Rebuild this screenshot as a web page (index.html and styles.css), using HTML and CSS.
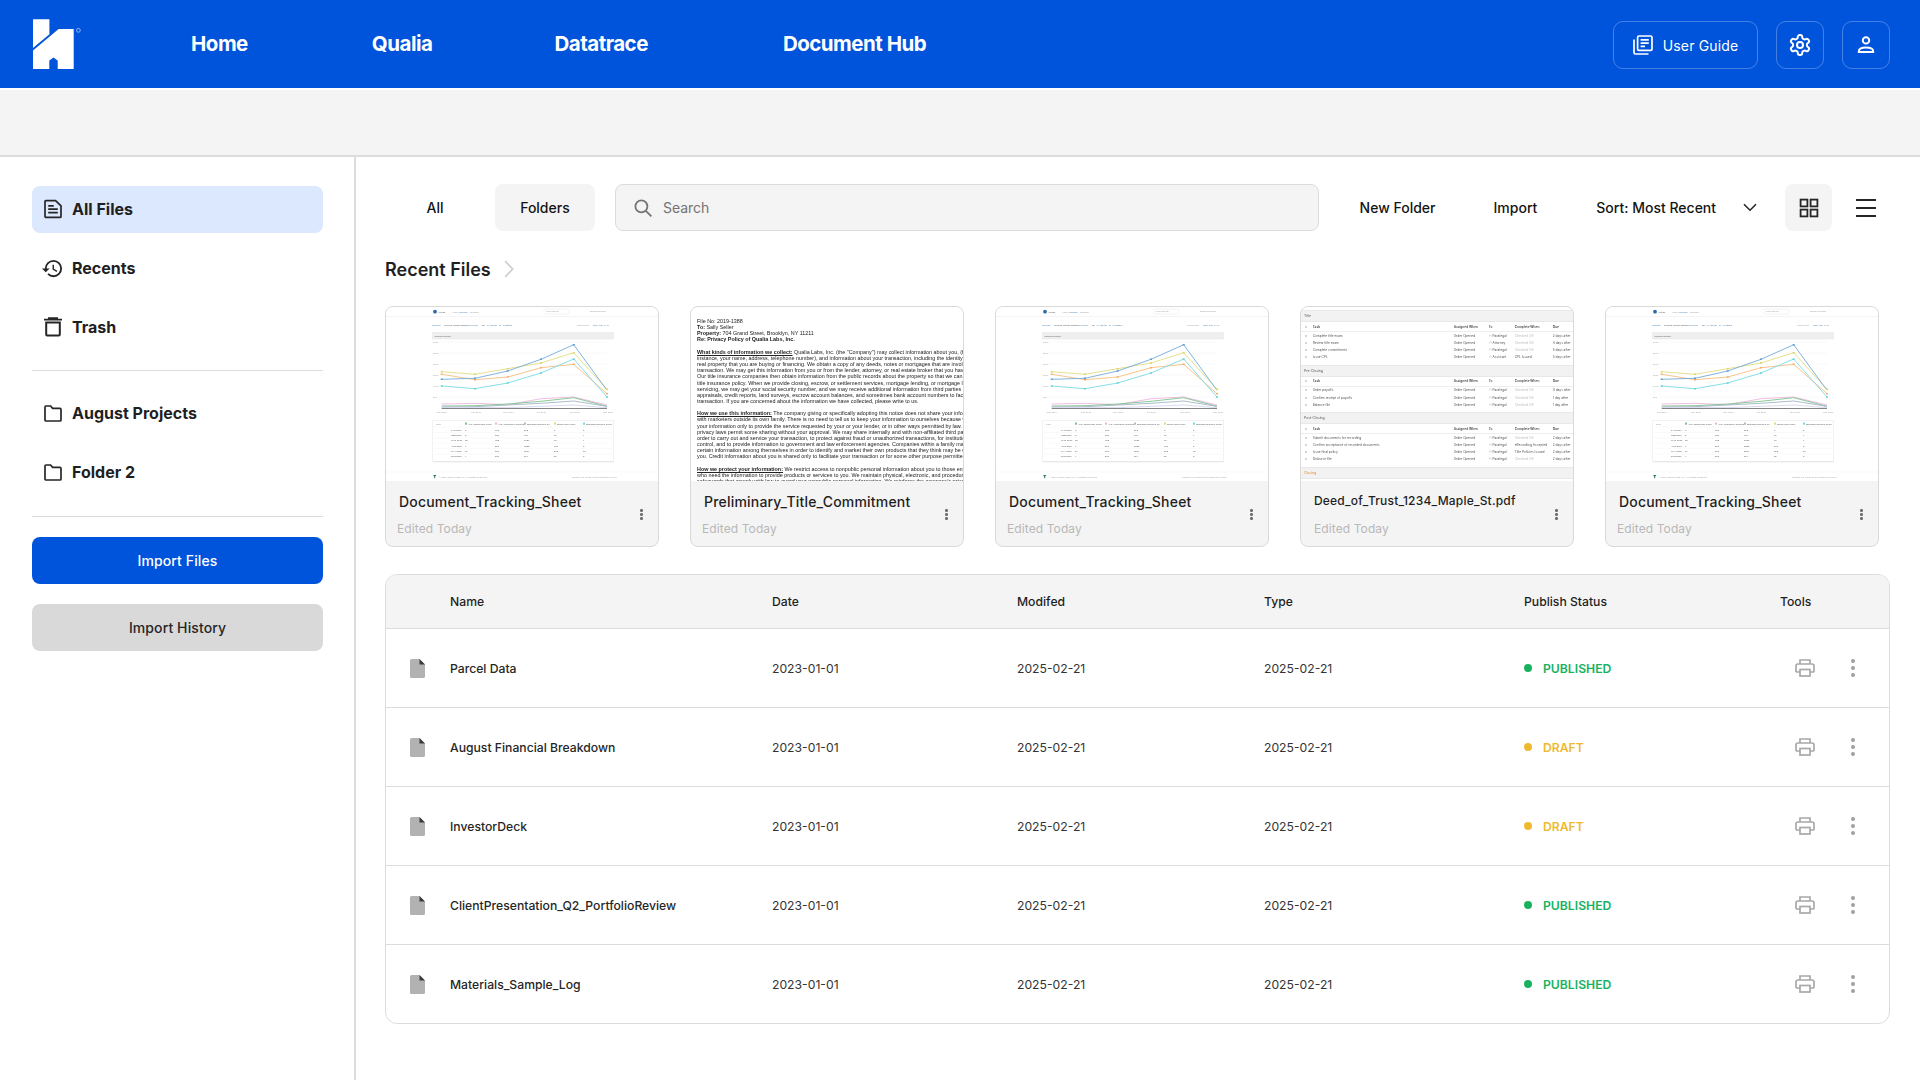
FILE: index.html
```html
<!DOCTYPE html>
<html lang="en">
<head>
<meta charset="utf-8">
<title>Document Hub</title>
<link rel="stylesheet" href="styles.css">
</head>
<body>
<header class="topbar">
  <svg class="logo" viewBox="33 18 48 50" width="48" height="50" aria-label="logo">
    <path fill="#fff" d="M33 18.9a.6.6 0 0 1 .6-.6H49.4v14.9L33 47z"/>
    <path fill="#fff" d="M33 49.6 58.6 27.9h15.1v39.8a.6.6 0 0 1-.6.6H57.7v-8.8L53.5 56.5l-4.2 3v8.8H33.6a.6.6 0 0 1-.6-.6z"/>
    <circle cx="78.4" cy="29.3" r="1.9" fill="none" stroke="#9dbcf2" stroke-width=".9"/>
  </svg>
  <nav class="nav">
    <a class="nav-link nav-home">Home</a>
    <a class="nav-link nav-qualia">Qualia</a>
    <a class="nav-link nav-data">Datatrace</a>
    <a class="nav-link nav-doc">Document Hub</a>
  </nav>
  <div class="top-actions">
    <button class="top-btn guide">
      <svg viewBox="0 0 20 20" width="20" height="20"><path d="M1 4.5V17.5A1.5 1.5 0 0 0 2.5 19H15.5" fill="none" stroke="#fff" stroke-width="1.7"/><rect x="4.6" y="1" width="14.4" height="14.4" rx="1.4" fill="none" stroke="#fff" stroke-width="1.7"/><path d="M7.6 4.8h8.2M7.6 8.1h8.2M7.6 11.4h4.4" stroke="#fff" stroke-width="1.7"/></svg>
      <span>User Guide</span>
    </button>
    <button class="top-btn square">
      <svg viewBox="0 0 24 24" width="24" height="24" fill="none" stroke="#fff" stroke-width="2"><path d="M12.22 2h-.44a2 2 0 0 0-2 2v.18a2 2 0 0 1-1 1.73l-.43.25a2 2 0 0 1-2 0l-.15-.08a2 2 0 0 0-2.73.73l-.22.38a2 2 0 0 0 .73 2.73l.15.1a2 2 0 0 1 1 1.72v.51a2 2 0 0 1-1 1.74l-.15.09a2 2 0 0 0-.73 2.73l.22.38a2 2 0 0 0 2.73.73l.15-.08a2 2 0 0 1 2 0l.43.25a2 2 0 0 1 1 1.73V20a2 2 0 0 0 2 2h.44a2 2 0 0 0 2-2v-.18a2 2 0 0 1 1-1.73l.43-.25a2 2 0 0 1 2 0l.15.08a2 2 0 0 0 2.73-.73l.22-.39a2 2 0 0 0-.73-2.73l-.15-.08a2 2 0 0 1-1-1.74v-.5a2 2 0 0 1 1-1.74l.15-.09a2 2 0 0 0 .73-2.73l-.22-.38a2 2 0 0 0-2.73-.73l-.15.08a2 2 0 0 1-2 0l-.43-.25a2 2 0 0 1-1-1.73V4a2 2 0 0 0-2-2z"/><circle cx="12" cy="12" r="3"/></svg>
    </button>
    <button class="top-btn square">
      <svg viewBox="0 0 24 24" width="24" height="24" fill="none" stroke="#fff" stroke-width="2"><circle cx="12" cy="7.4" r="3.2"/><path d="M4.8 19v-.6c0-2.6 3.6-3.8 7.2-3.8s7.2 1.2 7.2 3.8v.6z"/></svg>
    </button>
  </div>
</header>
<div class="subbar"></div>

<div class="layout">
  <aside class="sidebar">
    <ul class="side-list">
      <li class="side-item active">
        <svg viewBox="0 0 20 20" width="20" height="20" fill="none" stroke="#262626" stroke-width="1.7"><path d="M2 2.6a1 1 0 0 1 1-1h9.6l5.4 5.2v10.6a1 1 0 0 1-1 1H3a1 1 0 0 1-1-1z"/><path d="M5.2 6.8h5.6M5.2 10.2h9.6M5.2 13.6h9.6"/></svg>
        All Files
      </li>
      <li class="side-item">
        <svg class="hist" viewBox="0 0 24 24" width="23" height="23" fill="#262626"><path d="M13 3a9 9 0 0 0-9 9H1l3.89 3.89.07.14L9 12H6c0-3.87 3.13-7 7-7s7 3.13 7 7-3.13 7-7 7c-1.93 0-3.68-.79-4.94-2.06l-1.42 1.42A8.954 8.954 0 0 0 13 21a9 9 0 0 0 0-18zm-1 5v5l4.28 2.54.72-1.21-3.5-2.08V8H12z"/></svg>
        Recents
      </li>
      <li class="side-item">
        <svg viewBox="0 0 20 20" width="20" height="20" fill="none" stroke="#262626" stroke-width="2"><path d="M1 2.6h18M5 1h10" stroke-width="1.6"/><path d="M3.2 5.4h13.6v12.2a1 1 0 0 1-1 1H4.2a1 1 0 0 1-1-1z"/></svg>
        Trash
      </li>
    </ul>
    <div class="side-rule"></div>
    <ul class="side-list">
      <li class="side-item">
        <svg viewBox="0 0 20 20" width="20" height="20" fill="none" stroke="#262626" stroke-width="1.7"><path d="M2 4a1 1 0 0 1 1-1h4.6l2 2.4H17a1 1 0 0 1 1 1V17a1 1 0 0 1-1 1H3a1 1 0 0 1-1-1z"/></svg>
        August Projects
      </li>
      <li class="side-item">
        <svg viewBox="0 0 20 20" width="20" height="20" fill="none" stroke="#262626" stroke-width="1.7"><path d="M2 4a1 1 0 0 1 1-1h4.6l2 2.4H17a1 1 0 0 1 1 1V17a1 1 0 0 1-1 1H3a1 1 0 0 1-1-1z"/></svg>
        Folder 2
      </li>
    </ul>
    <div class="side-rule rule-low"></div>
    <button class="side-btn primary">Import Files</button>
    <button class="side-btn secondary">Import History</button>
  </aside>

  <main class="content">
    <div class="toolbar">
      <button class="tab">All</button>
      <button class="tab tab-on">Folders</button>
      <div class="search">
        <svg viewBox="0 0 20 20" width="20" height="20" fill="none" stroke="#737373" stroke-width="1.8"><circle cx="8.4" cy="8.4" r="6"/><path d="M12.8 12.8 18.4 18.4"/></svg>
        <span>Search</span>
      </div>
      <button class="tool tool-folder">New Folder</button>
      <button class="tool tool-import">Import</button>
      <button class="tool tool-sort">Sort: Most Recent
        <svg viewBox="0 0 14 9" width="14" height="9" fill="none" stroke="#262626" stroke-width="1.6"><path d="M1 1.2 7 7.2 13 1.2"/></svg>
      </button>
      <button class="view view-on">
        <svg viewBox="0 0 20 20" width="20" height="20" fill="none" stroke="#262626" stroke-width="1.8"><rect x="1.6" y="1.6" width="6.8" height="6.8"/><rect x="11.6" y="1.6" width="6.8" height="6.8"/><rect x="1.6" y="11.6" width="6.8" height="6.8"/><rect x="11.6" y="11.6" width="6.8" height="6.8"/></svg>
      </button>
      <button class="view">
        <svg viewBox="0 0 20 20" width="20" height="20" stroke="#262626" stroke-width="1.8"><path d="M0 2h20M0 10h20M0 18h20"/></svg>
      </button>
    </div>

    <h2 class="recent-title">Recent Files
      <svg viewBox="0 0 10 18" width="10" height="18" fill="none" stroke="#d0d0d0" stroke-width="1.8"><path d="M1.2 1.2 8.6 9 1.2 16.8"/></svg>
    </h2>

    <section class="cards">
      <article class="card">
        <div class="thumb">
          <svg class="chart" viewBox="0 0 272 175" width="272" height="175">
            <line x1="0" y1="9.5" x2="272" y2="9.5" stroke="#eee" stroke-width=".6"/>
            <circle cx="49" cy="4.7" r="1.9" fill="#2c6ca8"/>
            <text x="52" y="5.8" class="t b">Amuse</text><text x="66" y="5.8" class="t g">Home</text><text x="73" y="5.8" class="t l">Reports</text><text x="84" y="5.8" class="t g">Settings</text>
            <rect x="158" y="2" width="25" height="5" rx="1.5" fill="none" stroke="#ddd" stroke-width=".4"/><text x="160" y="5.4" class="t g">Find agents</text><text x="204" y="5.4" class="t g">Sarah Johnson</text>
            <text x="46" y="18.5" class="t l">Reports</text><text x="58" y="18.5" class="t b">Policies Report showing</text><text x="84" y="18.5" class="t l">Volume</text><text x="96" y="18.5" class="t b">for</text><text x="100" y="18.5" class="t l">All Agents</text><text x="113" y="18.5" class="t b">in</text><text x="116" y="18.5" class="t l">All States</text>
            <text x="191" y="18.5" class="t g">Last report:</text><text x="207" y="18.5" class="t l">This Year</text><text x="218" y="18.5" class="t g">2017</text>
            <rect x="46.5" y="25.5" width="181" height="6.5" fill="#efefef" stroke="#dfdfdf" stroke-width=".4"/><text x="48.5" y="30" class="t b">Policies Report</text>
            <path d="M53 35h168M53 46h168M53 57h168M53 68h168M53 79h168M53 90h168" stroke="#efefef" stroke-width=".4"/>
            <text x="47" y="36" class="t g">3000</text><text x="47" y="47" class="t g">2500</text><text x="47" y="58" class="t g">2000</text><text x="47" y="69" class="t g">1500</text><text x="47" y="80" class="t g">1000</text><text x="47" y="91" class="t g">500</text>
            <g fill="none" stroke-width=".9">
              <polyline stroke="#e2dc80" points="55.7,64.7 89,67.3 121.7,61.7 155,56 187.7,45.7 221,82.3"/>
              <polyline stroke="#f8bd7e" points="55.7,67.3 89,72.7 121.7,70 155,60.7 187.7,57.3 221,86.7"/>
              <polyline stroke="#72acdb" points="55.7,72.3 89,71.3 121.7,64 155,52.3 187.7,37.7 221,83.3"/>
              <polyline stroke="#78dbe3" points="55.7,79 89,81.7 121.7,76 155,66 187.7,52 221,90"/>
              <polyline stroke="#f1b5e0" points="55.7,97 89,96.3 121.7,97.7 155,91.7 187.7,90 221,98"/>
              <polyline stroke="#7cc48c" points="55.7,99 89,98.7 121.7,97 155,94.3 187.7,90.7 221,99.3"/>
              <polyline stroke="#a0b5c5" points="55.7,100 89,99.7 121.7,98 155,96.3 187.7,94 221,99.3"/>
              <polyline stroke="#d5d5ef" points="55.7,100.7 121.7,100.7 155,99.3 187.7,98 221,100.7"/>
              <polyline stroke="#777" points="55.7,101.5 221,101.5"/>
            </g>
            <path d="M54.7 72.3h2M88 71.3h2M120.7 64h2M154 52.3h2M186.7 37.7h2" stroke="#5e9ed2" stroke-width="1.6"/>
            <path d="M54.7 64.7h2M88 67.3h2M120.7 61.7h2M154 56h2M186.7 45.7h2M220 82.3h2" stroke="#dcd56a" stroke-width="1.6"/>
            <path d="M54.7 67.3h2M88 72.7h2M120.7 70h2M154 60.7h2M186.7 57.3h2M220 86.7h2" stroke="#f5ae66" stroke-width="1.6"/>
            <path d="M54.7 79h2M88 81.7h2M120.7 76h2M154 66h2M186.7 52h2M220 90h2" stroke="#62d3dc" stroke-width="1.6"/>
            <text x="51" y="106" class="t g">Jan 2016</text><text x="85" y="106" class="t g">Mar 2016</text><text x="117" y="106" class="t g">May 2016</text><text x="151" y="106" class="t g">Jul 2016</text><text x="184" y="106" class="t g">Sep 2016</text><text x="217" y="106" class="t g">Nov 2016</text>
            <rect x="46.7" y="113.3" width="181" height="41" fill="#fff" stroke="#e9e9e9" stroke-width=".6"/><rect x="46.7" y="154.3" width="181" height="1" fill="#e4e4e4"/>
            <rect x="79" y="115.5" width="2" height="2.2" fill="#7cc48c"/><rect x="109" y="115.5" width="2" height="2.2" fill="#f1b5e0"/><rect x="138" y="115.5" width="2" height="2.2" fill="#bbb"/><rect x="168" y="115.5" width="2" height="2.2" fill="#e2dc80"/><rect x="197" y="115.5" width="2" height="2.2" fill="#78dbe3"/>
            <text x="50" y="117.8" class="t g">Date</text><text x="82" y="117.8" class="t b">ALTA Brokerage Policy</text><text x="112" y="117.8" class="t b">ALTA Refinance Owner's</text><text x="141" y="117.8" class="t b">Standard Owner's Po</text><text x="171" y="117.8" class="t b">Short Loan Policy</text><text x="200" y="117.8" class="t b">Standard Owner's Policy</text>
            <path d="M48 120h178M48 125.5h178M48 131h178M48 136.3h178M48 141.6h178M48 147h178" stroke="#efefef" stroke-width=".4"/>
            <text x="65" y="123.6" class="t b">JAN 2016</text><text x="79" y="123.6" class="t b">8</text><text x="109" y="123.6" class="t b">175</text><text x="138" y="123.6" class="t b">592</text><text x="168" y="123.6" class="t b">8</text><text x="197" y="123.6" class="t b">5</text>
            <text x="65" y="129" class="t b">FEB 2016</text><text x="79" y="129" class="t b">3</text><text x="109" y="129" class="t b">130</text><text x="138" y="129" class="t b">984</text><text x="168" y="129" class="t b">91</text><text x="197" y="129" class="t b">4</text>
            <text x="65" y="134.4" class="t b">MAR 2016</text><text x="79" y="134.4" class="t b">12</text><text x="109" y="134.4" class="t b">423</text><text x="138" y="134.4" class="t b">1029</text><text x="168" y="134.4" class="t b">60</text><text x="197" y="134.4" class="t b">4</text>
            <text x="65" y="139.8" class="t b">APR 2016</text><text x="79" y="139.8" class="t b">9</text><text x="109" y="139.8" class="t b">270</text><text x="138" y="139.8" class="t b">1253</text><text x="168" y="139.8" class="t b">108</text><text x="197" y="139.8" class="t b">5</text>
            <text x="65" y="145" class="t b">MAY 2016</text><text x="79" y="145" class="t b">34</text><text x="109" y="145" class="t b">518</text><text x="138" y="145" class="t b">2864</text><text x="168" y="145" class="t b">273</text><text x="197" y="145" class="t b">18</text>
            <text x="65" y="150.4" class="t b">JUN 2016</text><text x="79" y="150.4" class="t b">4</text><text x="109" y="150.4" class="t b">208</text><text x="138" y="150.4" class="t b">394</text><text x="168" y="150.4" class="t b">37</text><text x="197" y="150.4" class="t b">3</text>
            <line x1="0" y1="165" x2="272" y2="165" stroke="#f0f0f0" stroke-width=".5"/>
            <path d="M47 168h3.4l-1.2 1.5v1.8h-1v-1.8z" fill="#2b7a55"/>
            <text x="53" y="170.6" class="t g">© 2016 Qualia Labs, Inc. All Rights Reserved.</text><text x="186" y="170.6" class="t g">Contact Us</text><text x="199" y="170.6" class="t g">Terms of Service</text><text x="216" y="170.6" class="t g">Privacy Policy</text>
          </svg>
        </div>
        <div class="info"><p class="card-name">Document_Tracking_Sheet</p><p class="card-meta">Edited Today</p><span class="kebab"><i></i><i></i><i></i></span></div>
      </article>
      <article class="card">
        <div class="thumb letter">
          <p>File No: 2019-1388<br><b>To:</b> Sally Seller<br><b>Property:</b> 704 Grand Street, Brooklyn, NY 11211<br><b>Re: Privacy Policy of Qualia Labs, Inc.</b></p>
          <p><b><u>What kinds of information we collect:</u></b> Qualia Labs, Inc. (the "Company") may collect information about you, (for<br>instance, your name, address, telephone number), and information about your transaction, including the identity of<br>real property that you are buying or financing. We obtain a copy of any deeds, notes or mortgages that are involved in<br>transaction. We may get this information from you or from the lender, attorney, or real estate broker that you have<br>Our title insurance companies then obtain information from the public records about the property so that we can provide<br>title insurance policy. When we provide closing, escrow, or settlement services, mortgage lending, or mortgage loan<br>servicing, we may get your social security number, and we may receive additional information from third parties in<br>appraisals, credit reports, land surveys, escrow account balances, and sometimes bank account numbers to facilitate<br>transaction. If you are concerned about the information we have collected, please write to us.</p>
          <p><b><u>How we use this information:</u></b> The company giving or specifically adopting this notice does not share your information<br>with marketers outside its own family. There is no need to tell us to keep your information to ourselves because we<br>your information only to provide the service requested by your or your lender, or in other ways permitted by law. The<br>privacy laws permit some sharing without your approval. We may share internally and with non-affiliated third parties<br>order to carry out and service your transaction, to protect against fraud or unauthorized transactions, for institutional<br>control, and to provide information to government and law enforcement agencies. Companies within a family may<br>certain information among themselves in order to identify and market their own products that they think may be useful<br>you. Credit information about you is shared only to facilitate your transaction or for some other purpose permitted</p>
          <p><b><u>How we protect your information:</u></b> We restrict access to nonpublic personal information about you to those employees<br>who need the information to provide products or services to you. We maintain physical, electronic, and procedural<br>safeguards that comply with law to guard your nonpublic personal information. We reinforce the company's privacy</p>
        </div>
        <div class="info"><p class="card-name">Preliminary_Title_Commitment</p><p class="card-meta">Edited Today</p><span class="kebab"><i></i><i></i><i></i></span></div>
      </article>
      <article class="card">
        <div class="thumb">
          <svg class="chart" viewBox="0 0 272 175" width="272" height="175">
            <line x1="0" y1="9.5" x2="272" y2="9.5" stroke="#eee" stroke-width=".6"/>
            <circle cx="49" cy="4.7" r="1.9" fill="#2c6ca8"/>
            <text x="52" y="5.8" class="t b">Amuse</text><text x="66" y="5.8" class="t g">Home</text><text x="73" y="5.8" class="t l">Reports</text><text x="84" y="5.8" class="t g">Settings</text>
            <rect x="158" y="2" width="25" height="5" rx="1.5" fill="none" stroke="#ddd" stroke-width=".4"/><text x="160" y="5.4" class="t g">Find agents</text><text x="204" y="5.4" class="t g">Sarah Johnson</text>
            <text x="46" y="18.5" class="t l">Reports</text><text x="58" y="18.5" class="t b">Policies Report showing</text><text x="84" y="18.5" class="t l">Volume</text><text x="96" y="18.5" class="t b">for</text><text x="100" y="18.5" class="t l">All Agents</text><text x="113" y="18.5" class="t b">in</text><text x="116" y="18.5" class="t l">All States</text>
            <text x="191" y="18.5" class="t g">Last report:</text><text x="207" y="18.5" class="t l">This Year</text><text x="218" y="18.5" class="t g">2017</text>
            <rect x="46.5" y="25.5" width="181" height="6.5" fill="#efefef" stroke="#dfdfdf" stroke-width=".4"/><text x="48.5" y="30" class="t b">Policies Report</text>
            <path d="M53 35h168M53 46h168M53 57h168M53 68h168M53 79h168M53 90h168" stroke="#efefef" stroke-width=".4"/>
            <text x="47" y="36" class="t g">3000</text><text x="47" y="47" class="t g">2500</text><text x="47" y="58" class="t g">2000</text><text x="47" y="69" class="t g">1500</text><text x="47" y="80" class="t g">1000</text><text x="47" y="91" class="t g">500</text>
            <g fill="none" stroke-width=".9">
              <polyline stroke="#e2dc80" points="55.7,64.7 89,67.3 121.7,61.7 155,56 187.7,45.7 221,82.3"/>
              <polyline stroke="#f8bd7e" points="55.7,67.3 89,72.7 121.7,70 155,60.7 187.7,57.3 221,86.7"/>
              <polyline stroke="#72acdb" points="55.7,72.3 89,71.3 121.7,64 155,52.3 187.7,37.7 221,83.3"/>
              <polyline stroke="#78dbe3" points="55.7,79 89,81.7 121.7,76 155,66 187.7,52 221,90"/>
              <polyline stroke="#f1b5e0" points="55.7,97 89,96.3 121.7,97.7 155,91.7 187.7,90 221,98"/>
              <polyline stroke="#7cc48c" points="55.7,99 89,98.7 121.7,97 155,94.3 187.7,90.7 221,99.3"/>
              <polyline stroke="#a0b5c5" points="55.7,100 89,99.7 121.7,98 155,96.3 187.7,94 221,99.3"/>
              <polyline stroke="#d5d5ef" points="55.7,100.7 121.7,100.7 155,99.3 187.7,98 221,100.7"/>
              <polyline stroke="#777" points="55.7,101.5 221,101.5"/>
            </g>
            <path d="M54.7 72.3h2M88 71.3h2M120.7 64h2M154 52.3h2M186.7 37.7h2" stroke="#5e9ed2" stroke-width="1.6"/>
            <path d="M54.7 64.7h2M88 67.3h2M120.7 61.7h2M154 56h2M186.7 45.7h2M220 82.3h2" stroke="#dcd56a" stroke-width="1.6"/>
            <path d="M54.7 67.3h2M88 72.7h2M120.7 70h2M154 60.7h2M186.7 57.3h2M220 86.7h2" stroke="#f5ae66" stroke-width="1.6"/>
            <path d="M54.7 79h2M88 81.7h2M120.7 76h2M154 66h2M186.7 52h2M220 90h2" stroke="#62d3dc" stroke-width="1.6"/>
            <text x="51" y="106" class="t g">Jan 2016</text><text x="85" y="106" class="t g">Mar 2016</text><text x="117" y="106" class="t g">May 2016</text><text x="151" y="106" class="t g">Jul 2016</text><text x="184" y="106" class="t g">Sep 2016</text><text x="217" y="106" class="t g">Nov 2016</text>
            <rect x="46.7" y="113.3" width="181" height="41" fill="#fff" stroke="#e9e9e9" stroke-width=".6"/><rect x="46.7" y="154.3" width="181" height="1" fill="#e4e4e4"/>
            <rect x="79" y="115.5" width="2" height="2.2" fill="#7cc48c"/><rect x="109" y="115.5" width="2" height="2.2" fill="#f1b5e0"/><rect x="138" y="115.5" width="2" height="2.2" fill="#bbb"/><rect x="168" y="115.5" width="2" height="2.2" fill="#e2dc80"/><rect x="197" y="115.5" width="2" height="2.2" fill="#78dbe3"/>
            <text x="50" y="117.8" class="t g">Date</text><text x="82" y="117.8" class="t b">ALTA Brokerage Policy</text><text x="112" y="117.8" class="t b">ALTA Refinance Owner's</text><text x="141" y="117.8" class="t b">Standard Owner's Po</text><text x="171" y="117.8" class="t b">Short Loan Policy</text><text x="200" y="117.8" class="t b">Standard Owner's Policy</text>
            <path d="M48 120h178M48 125.5h178M48 131h178M48 136.3h178M48 141.6h178M48 147h178" stroke="#efefef" stroke-width=".4"/>
            <text x="65" y="123.6" class="t b">JAN 2016</text><text x="79" y="123.6" class="t b">8</text><text x="109" y="123.6" class="t b">175</text><text x="138" y="123.6" class="t b">592</text><text x="168" y="123.6" class="t b">8</text><text x="197" y="123.6" class="t b">5</text>
            <text x="65" y="129" class="t b">FEB 2016</text><text x="79" y="129" class="t b">3</text><text x="109" y="129" class="t b">130</text><text x="138" y="129" class="t b">984</text><text x="168" y="129" class="t b">91</text><text x="197" y="129" class="t b">4</text>
            <text x="65" y="134.4" class="t b">MAR 2016</text><text x="79" y="134.4" class="t b">12</text><text x="109" y="134.4" class="t b">423</text><text x="138" y="134.4" class="t b">1029</text><text x="168" y="134.4" class="t b">60</text><text x="197" y="134.4" class="t b">4</text>
            <text x="65" y="139.8" class="t b">APR 2016</text><text x="79" y="139.8" class="t b">9</text><text x="109" y="139.8" class="t b">270</text><text x="138" y="139.8" class="t b">1253</text><text x="168" y="139.8" class="t b">108</text><text x="197" y="139.8" class="t b">5</text>
            <text x="65" y="145" class="t b">MAY 2016</text><text x="79" y="145" class="t b">34</text><text x="109" y="145" class="t b">518</text><text x="138" y="145" class="t b">2864</text><text x="168" y="145" class="t b">273</text><text x="197" y="145" class="t b">18</text>
            <text x="65" y="150.4" class="t b">JUN 2016</text><text x="79" y="150.4" class="t b">4</text><text x="109" y="150.4" class="t b">208</text><text x="138" y="150.4" class="t b">394</text><text x="168" y="150.4" class="t b">37</text><text x="197" y="150.4" class="t b">3</text>
            <line x1="0" y1="165" x2="272" y2="165" stroke="#f0f0f0" stroke-width=".5"/>
            <path d="M47 168h3.4l-1.2 1.5v1.8h-1v-1.8z" fill="#2b7a55"/>
            <text x="53" y="170.6" class="t g">© 2016 Qualia Labs, Inc. All Rights Reserved.</text><text x="186" y="170.6" class="t g">Contact Us</text><text x="199" y="170.6" class="t g">Terms of Service</text><text x="216" y="170.6" class="t g">Privacy Policy</text>
          </svg>
        </div>
        <div class="info"><p class="card-name">Document_Tracking_Sheet</p><p class="card-meta">Edited Today</p><span class="kebab"><i></i><i></i><i></i></span></div>
      </article>
      <article class="card">
        <div class="thumb tasks">
          <div class="band">Title</div>
          <div class="trow thead"><i></i><span>Task</span><span>Assigned When</span><span>To</span><span>Complete When</span><span>Due</span></div>
          <div class="trow"><i></i><span>Complete title exam</span><span>Order Opened</span><span>⚇ Paralegal</span><span class="mute">Checked Off</span><span>2 days after</span></div>
          <div class="trow"><i></i><span>Review title exam</span><span>Order Opened</span><span>⚇ Attorney</span><span class="mute">Checked Off</span><span>4 days after</span></div>
          <div class="trow"><i></i><span>Complete commitment</span><span>Order Opened</span><span>⚇ Paralegal</span><span class="mute">Checked Off</span><span>5 days after</span></div>
          <div class="trow"><i></i><span>Issue CPL</span><span>Order Opened</span><span>⚇ Assistant</span><span>CPL Issued</span><span>5 days after</span></div>
          <div class="band gap">Pre-Closing</div>
          <div class="trow thead"><i></i><span>Task</span><span>Assigned When</span><span>To</span><span>Complete When</span><span>Due</span></div>
          <div class="trow"><i></i><span>Order payoffs</span><span>Order Opened</span><span>⚇ Paralegal</span><span class="mute">Checked Off</span><span>4 days after</span></div>
          <div class="trow"><i></i><span>Confirm receipt of payoffs</span><span>Order Opened</span><span>⚇ Paralegal</span><span class="mute">Checked Off</span><span>1 day after</span></div>
          <div class="trow"><i></i><span>Balance file</span><span>Order Opened</span><span>⚇ Paralegal</span><span class="mute">Checked Off</span><span>1 day after</span></div>
          <div class="band gap">Post-Closing</div>
          <div class="trow thead"><i></i><span>Task</span><span>Assigned When</span><span>To</span><span>Complete When</span><span>Due</span></div>
          <div class="trow"><i></i><span>Submit documents for recording</span><span>Order Opened</span><span>⚇ Paralegal</span><span class="mute">Checked Off</span><span>2 days after</span></div>
          <div class="trow"><i></i><span>Confirm acceptance of recorded documents</span><span>Order Opened</span><span>⚇ Paralegal</span><span>eRecording Accepted</span><span>2 days after</span></div>
          <div class="trow"><i></i><span>Issue final policy</span><span>Order Opened</span><span>⚇ Paralegal</span><span>Title Policies Issued</span><span>2 days after</span></div>
          <div class="trow"><i></i><span>Disburse file</span><span>Order Opened</span><span>⚇ Paralegal</span><span class="mute">Checked Off</span><span>2 days after</span></div>
          <div class="band gap closing">Closing</div>
        </div>
        <div class="info"><p class="card-name deed">Deed_of_Trust_1234_Maple_St.pdf</p><p class="card-meta">Edited Today</p><span class="kebab"><i></i><i></i><i></i></span></div>
      </article>
      <article class="card">
        <div class="thumb">
          <svg class="chart" viewBox="0 0 272 175" width="272" height="175">
            <line x1="0" y1="9.5" x2="272" y2="9.5" stroke="#eee" stroke-width=".6"/>
            <circle cx="49" cy="4.7" r="1.9" fill="#2c6ca8"/>
            <text x="52" y="5.8" class="t b">Amuse</text><text x="66" y="5.8" class="t g">Home</text><text x="73" y="5.8" class="t l">Reports</text><text x="84" y="5.8" class="t g">Settings</text>
            <rect x="158" y="2" width="25" height="5" rx="1.5" fill="none" stroke="#ddd" stroke-width=".4"/><text x="160" y="5.4" class="t g">Find agents</text><text x="204" y="5.4" class="t g">Sarah Johnson</text>
            <text x="46" y="18.5" class="t l">Reports</text><text x="58" y="18.5" class="t b">Policies Report showing</text><text x="84" y="18.5" class="t l">Volume</text><text x="96" y="18.5" class="t b">for</text><text x="100" y="18.5" class="t l">All Agents</text><text x="113" y="18.5" class="t b">in</text><text x="116" y="18.5" class="t l">All States</text>
            <text x="191" y="18.5" class="t g">Last report:</text><text x="207" y="18.5" class="t l">This Year</text><text x="218" y="18.5" class="t g">2017</text>
            <rect x="46.5" y="25.5" width="181" height="6.5" fill="#efefef" stroke="#dfdfdf" stroke-width=".4"/><text x="48.5" y="30" class="t b">Policies Report</text>
            <path d="M53 35h168M53 46h168M53 57h168M53 68h168M53 79h168M53 90h168" stroke="#efefef" stroke-width=".4"/>
            <text x="47" y="36" class="t g">3000</text><text x="47" y="47" class="t g">2500</text><text x="47" y="58" class="t g">2000</text><text x="47" y="69" class="t g">1500</text><text x="47" y="80" class="t g">1000</text><text x="47" y="91" class="t g">500</text>
            <g fill="none" stroke-width=".9">
              <polyline stroke="#e2dc80" points="55.7,64.7 89,67.3 121.7,61.7 155,56 187.7,45.7 221,82.3"/>
              <polyline stroke="#f8bd7e" points="55.7,67.3 89,72.7 121.7,70 155,60.7 187.7,57.3 221,86.7"/>
              <polyline stroke="#72acdb" points="55.7,72.3 89,71.3 121.7,64 155,52.3 187.7,37.7 221,83.3"/>
              <polyline stroke="#78dbe3" points="55.7,79 89,81.7 121.7,76 155,66 187.7,52 221,90"/>
              <polyline stroke="#f1b5e0" points="55.7,97 89,96.3 121.7,97.7 155,91.7 187.7,90 221,98"/>
              <polyline stroke="#7cc48c" points="55.7,99 89,98.7 121.7,97 155,94.3 187.7,90.7 221,99.3"/>
              <polyline stroke="#a0b5c5" points="55.7,100 89,99.7 121.7,98 155,96.3 187.7,94 221,99.3"/>
              <polyline stroke="#d5d5ef" points="55.7,100.7 121.7,100.7 155,99.3 187.7,98 221,100.7"/>
              <polyline stroke="#777" points="55.7,101.5 221,101.5"/>
            </g>
            <path d="M54.7 72.3h2M88 71.3h2M120.7 64h2M154 52.3h2M186.7 37.7h2" stroke="#5e9ed2" stroke-width="1.6"/>
            <path d="M54.7 64.7h2M88 67.3h2M120.7 61.7h2M154 56h2M186.7 45.7h2M220 82.3h2" stroke="#dcd56a" stroke-width="1.6"/>
            <path d="M54.7 67.3h2M88 72.7h2M120.7 70h2M154 60.7h2M186.7 57.3h2M220 86.7h2" stroke="#f5ae66" stroke-width="1.6"/>
            <path d="M54.7 79h2M88 81.7h2M120.7 76h2M154 66h2M186.7 52h2M220 90h2" stroke="#62d3dc" stroke-width="1.6"/>
            <text x="51" y="106" class="t g">Jan 2016</text><text x="85" y="106" class="t g">Mar 2016</text><text x="117" y="106" class="t g">May 2016</text><text x="151" y="106" class="t g">Jul 2016</text><text x="184" y="106" class="t g">Sep 2016</text><text x="217" y="106" class="t g">Nov 2016</text>
            <rect x="46.7" y="113.3" width="181" height="41" fill="#fff" stroke="#e9e9e9" stroke-width=".6"/><rect x="46.7" y="154.3" width="181" height="1" fill="#e4e4e4"/>
            <rect x="79" y="115.5" width="2" height="2.2" fill="#7cc48c"/><rect x="109" y="115.5" width="2" height="2.2" fill="#f1b5e0"/><rect x="138" y="115.5" width="2" height="2.2" fill="#bbb"/><rect x="168" y="115.5" width="2" height="2.2" fill="#e2dc80"/><rect x="197" y="115.5" width="2" height="2.2" fill="#78dbe3"/>
            <text x="50" y="117.8" class="t g">Date</text><text x="82" y="117.8" class="t b">ALTA Brokerage Policy</text><text x="112" y="117.8" class="t b">ALTA Refinance Owner's</text><text x="141" y="117.8" class="t b">Standard Owner's Po</text><text x="171" y="117.8" class="t b">Short Loan Policy</text><text x="200" y="117.8" class="t b">Standard Owner's Policy</text>
            <path d="M48 120h178M48 125.5h178M48 131h178M48 136.3h178M48 141.6h178M48 147h178" stroke="#efefef" stroke-width=".4"/>
            <text x="65" y="123.6" class="t b">JAN 2016</text><text x="79" y="123.6" class="t b">8</text><text x="109" y="123.6" class="t b">175</text><text x="138" y="123.6" class="t b">592</text><text x="168" y="123.6" class="t b">8</text><text x="197" y="123.6" class="t b">5</text>
            <text x="65" y="129" class="t b">FEB 2016</text><text x="79" y="129" class="t b">3</text><text x="109" y="129" class="t b">130</text><text x="138" y="129" class="t b">984</text><text x="168" y="129" class="t b">91</text><text x="197" y="129" class="t b">4</text>
            <text x="65" y="134.4" class="t b">MAR 2016</text><text x="79" y="134.4" class="t b">12</text><text x="109" y="134.4" class="t b">423</text><text x="138" y="134.4" class="t b">1029</text><text x="168" y="134.4" class="t b">60</text><text x="197" y="134.4" class="t b">4</text>
            <text x="65" y="139.8" class="t b">APR 2016</text><text x="79" y="139.8" class="t b">9</text><text x="109" y="139.8" class="t b">270</text><text x="138" y="139.8" class="t b">1253</text><text x="168" y="139.8" class="t b">108</text><text x="197" y="139.8" class="t b">5</text>
            <text x="65" y="145" class="t b">MAY 2016</text><text x="79" y="145" class="t b">34</text><text x="109" y="145" class="t b">518</text><text x="138" y="145" class="t b">2864</text><text x="168" y="145" class="t b">273</text><text x="197" y="145" class="t b">18</text>
            <text x="65" y="150.4" class="t b">JUN 2016</text><text x="79" y="150.4" class="t b">4</text><text x="109" y="150.4" class="t b">208</text><text x="138" y="150.4" class="t b">394</text><text x="168" y="150.4" class="t b">37</text><text x="197" y="150.4" class="t b">3</text>
            <line x1="0" y1="165" x2="272" y2="165" stroke="#f0f0f0" stroke-width=".5"/>
            <path d="M47 168h3.4l-1.2 1.5v1.8h-1v-1.8z" fill="#2b7a55"/>
            <text x="53" y="170.6" class="t g">© 2016 Qualia Labs, Inc. All Rights Reserved.</text><text x="186" y="170.6" class="t g">Contact Us</text><text x="199" y="170.6" class="t g">Terms of Service</text><text x="216" y="170.6" class="t g">Privacy Policy</text>
          </svg>
        </div>
        <div class="info"><p class="card-name">Document_Tracking_Sheet</p><p class="card-meta">Edited Today</p><span class="kebab"><i></i><i></i><i></i></span></div>
      </article>
    </section>

    <section class="table">
      <div class="row head"><span></span><span>Name</span><span>Date</span><span>Modifed</span><span>Type</span><span>Publish Status</span><span>Tools</span></div>

      <div class="row">
        <svg class="file" viewBox="0 0 15 19" width="15" height="19"><path fill="#b2b2b2" d="M1.5 0H9.5L15 5.5V17.5A1.5 1.5 0 0 1 13.5 19H1.5A1.5 1.5 0 0 1 0 17.5V1.5A1.5 1.5 0 0 1 1.5 0z"/><path fill="#3a3a3a" d="M9.5 0 15 5.5H9.5z"/></svg>
        <span class="name">Parcel Data</span><span>2023-01-01</span><span>2025-02-21</span><span>2025-02-21</span>
        <span class="status ok">PUBLISHED</span>
        <div class="tools">
          <svg viewBox="0 0 20 18" width="20" height="18" fill="none" stroke="#a8a8a8" stroke-width="1.7"><path d="M5 5V1h10v4"/><path d="M5 13H2a1 1 0 0 1-1-1V7a2 2 0 0 1 2-2h14a2 2 0 0 1 2 2v5a1 1 0 0 1-1 1h-3"/><rect x="5" y="10.5" width="10" height="6.5"/></svg>
          <span class="kebab-row"><i></i><i></i><i></i></span>
        </div>
      </div>

      <div class="row">
        <svg class="file" viewBox="0 0 15 19" width="15" height="19"><path fill="#b2b2b2" d="M1.5 0H9.5L15 5.5V17.5A1.5 1.5 0 0 1 13.5 19H1.5A1.5 1.5 0 0 1 0 17.5V1.5A1.5 1.5 0 0 1 1.5 0z"/><path fill="#3a3a3a" d="M9.5 0 15 5.5H9.5z"/></svg>
        <span class="name">August Financial Breakdown</span><span>2023-01-01</span><span>2025-02-21</span><span>2025-02-21</span>
        <span class="status warn">DRAFT</span>
        <div class="tools">
          <svg viewBox="0 0 20 18" width="20" height="18" fill="none" stroke="#a8a8a8" stroke-width="1.7"><path d="M5 5V1h10v4"/><path d="M5 13H2a1 1 0 0 1-1-1V7a2 2 0 0 1 2-2h14a2 2 0 0 1 2 2v5a1 1 0 0 1-1 1h-3"/><rect x="5" y="10.5" width="10" height="6.5"/></svg>
          <span class="kebab-row"><i></i><i></i><i></i></span>
        </div>
      </div>

      <div class="row">
        <svg class="file" viewBox="0 0 15 19" width="15" height="19"><path fill="#b2b2b2" d="M1.5 0H9.5L15 5.5V17.5A1.5 1.5 0 0 1 13.5 19H1.5A1.5 1.5 0 0 1 0 17.5V1.5A1.5 1.5 0 0 1 1.5 0z"/><path fill="#3a3a3a" d="M9.5 0 15 5.5H9.5z"/></svg>
        <span class="name">InvestorDeck</span><span>2023-01-01</span><span>2025-02-21</span><span>2025-02-21</span>
        <span class="status warn">DRAFT</span>
        <div class="tools">
          <svg viewBox="0 0 20 18" width="20" height="18" fill="none" stroke="#a8a8a8" stroke-width="1.7"><path d="M5 5V1h10v4"/><path d="M5 13H2a1 1 0 0 1-1-1V7a2 2 0 0 1 2-2h14a2 2 0 0 1 2 2v5a1 1 0 0 1-1 1h-3"/><rect x="5" y="10.5" width="10" height="6.5"/></svg>
          <span class="kebab-row"><i></i><i></i><i></i></span>
        </div>
      </div>

      <div class="row">
        <svg class="file" viewBox="0 0 15 19" width="15" height="19"><path fill="#b2b2b2" d="M1.5 0H9.5L15 5.5V17.5A1.5 1.5 0 0 1 13.5 19H1.5A1.5 1.5 0 0 1 0 17.5V1.5A1.5 1.5 0 0 1 1.5 0z"/><path fill="#3a3a3a" d="M9.5 0 15 5.5H9.5z"/></svg>
        <span class="name">ClientPresentation_Q2_PortfolioReview</span><span>2023-01-01</span><span>2025-02-21</span><span>2025-02-21</span>
        <span class="status ok">PUBLISHED</span>
        <div class="tools">
          <svg viewBox="0 0 20 18" width="20" height="18" fill="none" stroke="#a8a8a8" stroke-width="1.7"><path d="M5 5V1h10v4"/><path d="M5 13H2a1 1 0 0 1-1-1V7a2 2 0 0 1 2-2h14a2 2 0 0 1 2 2v5a1 1 0 0 1-1 1h-3"/><rect x="5" y="10.5" width="10" height="6.5"/></svg>
          <span class="kebab-row"><i></i><i></i><i></i></span>
        </div>
      </div>

      <div class="row last">
        <svg class="file" viewBox="0 0 15 19" width="15" height="19"><path fill="#b2b2b2" d="M1.5 0H9.5L15 5.5V17.5A1.5 1.5 0 0 1 13.5 19H1.5A1.5 1.5 0 0 1 0 17.5V1.5A1.5 1.5 0 0 1 1.5 0z"/><path fill="#3a3a3a" d="M9.5 0 15 5.5H9.5z"/></svg>
        <span class="name">Materials_Sample_Log</span><span>2023-01-01</span><span>2025-02-21</span><span>2025-02-21</span>
        <span class="status ok">PUBLISHED</span>
        <div class="tools">
          <svg viewBox="0 0 20 18" width="20" height="18" fill="none" stroke="#a8a8a8" stroke-width="1.7"><path d="M5 5V1h10v4"/><path d="M5 13H2a1 1 0 0 1-1-1V7a2 2 0 0 1 2-2h14a2 2 0 0 1 2 2v5a1 1 0 0 1-1 1h-3"/><rect x="5" y="10.5" width="10" height="6.5"/></svg>
          <span class="kebab-row"><i></i><i></i><i></i></span>
        </div>
      </div>
    </section>
  </main>
</div>
</body>
</html>
```

FILE: styles.css
```css
* { box-sizing: border-box; }
html, body { margin: 0; padding: 0; }
body {
  width: 1920px;
  height: 1080px;
  overflow: hidden;
  background: #fff;
  color: #1f1f1f;
  font-family: Inter, "Liberation Sans", sans-serif;
  display: flex;
  flex-direction: column;
}
button { font-family: inherit; border: 0; background: none; padding: 0; color: inherit; }
ul { list-style: none; margin: 0; padding: 0; }
p, h2 { margin: 0; }

/* top bar */
.topbar {
  flex: none;
  height: 88px;
  background: #0053db;
  display: flex;
  align-items: center;
  padding: 0 30px 0 33px;
}
.logo { flex: none; margin-top: -1px; }
.nav { display: flex; align-items: center; margin: -2px 0 0 110px; flex: 1; }
.nav-link {
  color: #fff;
  font-size: 20.5px;
  font-weight: 700;
  letter-spacing: -0.5px;
}
.nav-qualia { margin-left: 124px; }
.nav-data { margin-left: 122px; }
.nav-doc { margin-left: 135px; }
.top-actions { display: flex; gap: 18px; margin-top: 2px; }
.top-btn {
  height: 48px;
  border: 1px solid rgba(255, 255, 255, .27);
  border-radius: 10px;
  color: #fff;
  font-size: 14px;
  font-weight: 400;
  letter-spacing: .15px;
  display: flex;
  align-items: center;
  justify-content: center;
}
.guide { width: 145px; gap: 10px; }
.square { width: 48px; }
.subbar {
  flex: none;
  height: 67px;
  margin-top: 2px;
  background: #f4f4f4;
  border-bottom: 2px solid #dcdcdc;
}

/* layout */
.layout { flex: 1; display: flex; min-height: 0; }
.sidebar {
  flex: none;
  width: 356px;
  border-right: 2px solid #dcdcdc;
  padding: 29px 31px 0 32px;
}
.side-list { display: flex; flex-direction: column; gap: 12px; }
.side-item {
  height: 47px;
  padding: 0 0 1px 11px;
  border-radius: 8px;
  display: flex;
  align-items: center;
  gap: 9px;
  font-size: 16px;
  font-weight: 700;
  color: #1f1f1f;
}
.side-item svg { flex: none; }
.side-item .hist { margin: 0 -1px 0 -2px; }
.active { background: #dce8fe; }
.side-rule { height: 1px; background: #dcdcdc; margin: 19px 0; }
.rule-low { margin: 20px 0; }
.side-btn {
  display: block;
  width: 100%;
  height: 47px;
  border-radius: 8px;
  font-size: 14px;
  font-weight: 500;
  letter-spacing: .1px;
}
.primary { background: #0053db; color: #fff; }
.secondary { background: #d9d9d9; color: #262626; margin-top: 20px; }

/* main */
.content { flex: 1; min-width: 0; padding: 27px 31px 0 29px; }
.toolbar { display: flex; align-items: center; height: 47px; }
.tab {
  width: 100px;
  height: 47px;
  border-radius: 8px;
  font-size: 14px;
  font-weight: 500;
  color: #141414;
  margin-right: 10px;
}
.tab-on { background: #f4f4f4; margin-right: 20px; }
.search {
  width: 704px;
  height: 47px;
  border: 1px solid #dcdcdc;
  border-radius: 8px;
  background: #f4f4f4;
  display: flex;
  align-items: center;
  gap: 10px;
  padding-left: 17px;
  font-size: 14px;
  color: #737373;
}
.tool {
  font-size: 14px;
  font-weight: 500;
  color: #141414;
  white-space: nowrap;
}
.tool-folder { margin-left: 41px; }
.tool-import { margin-left: 58px; }
.tool-sort { margin-left: 59px; display: flex; align-items: center; gap: 27px; }
.view {
  width: 47px;
  height: 47px;
  border-radius: 8px;
  display: flex;
  align-items: center;
  justify-content: center;
}
.view-on { background: #f4f4f4; margin-left: 28px; }
.view + .view { margin-left: 10px; }

.recent-title {
  display: flex;
  align-items: center;
  gap: 13px;
  height: 22px;
  margin-top: 27px;
  margin-bottom: 26px;
  font-size: 18px;
  font-weight: 600;
  color: #1f1f1f;
}

/* cards */
.cards { display: grid; grid-template-columns: repeat(5, 274px); gap: 31px; }
.card {
  height: 241px;
  border: 1px solid #d9d9d9;
  border-radius: 8px;
  overflow: hidden;
  display: flex;
  flex-direction: column;
  background: #f4f4f4;
}
.thumb { height: 174px; flex: none; background: #fff; overflow: hidden; }
.chart { display: block; filter: blur(.2px); }
.t { font-size: 2.4px; font-family: "Liberation Sans", sans-serif; }
.b { fill: #555; }
.g { fill: #a5a5a5; }
.l { fill: #4580b8; }

.letter {
  padding: 11px 0 0 6px;
  font-family: "Liberation Sans", sans-serif;
  font-size: 5.4px;
  line-height: 6.15px;
  color: #222;
  white-space: nowrap;
  filter: blur(.2px);
}
.letter p { margin-bottom: 6.15px; }

.tasks { padding-top: 3px; font-size: 3.2px; color: #444; font-family: Inter, sans-serif; filter: blur(.15px); }
.band {
  height: 12px;
  padding-left: 3px;
  display: flex;
  align-items: center;
  background: #f2f2f2;
  border-top: 1px solid #e8e8e8;
  border-bottom: 1px solid #e8e8e8;
  font-size: 3.4px;
  color: #555;
}
.gap { margin-top: 4px; }
.closing { color: #d98a2b; }
.trow {
  height: 7.2px;
  display: grid;
  grid-template-columns: 11.7px 141px 35px 26px 38px 1fr;
  align-items: center;
  white-space: nowrap;
  color: #555;
  overflow: hidden;
}
.trow i { width: 2.5px; height: 2px; margin-left: 3.5px; background: #d5d5d5; }
.thead { height: 10px; font-weight: 600; color: #444; border-bottom: 1px solid #eee; }
.mute { color: #bbb; }

.info { position: relative; flex: 1; padding-left: 13px; }
.card-name {
  margin-top: 10px;
  height: 22px;
  line-height: 22px;
  font-size: 14px;
  font-weight: 500;
  color: #1f1f1f;
  letter-spacing: .2px;
}
.card-name.deed { font-size: 12px; margin-top: 9px; }
.card-meta {
  margin: 8px 0 0 -2px;
  font-size: 12px;
  line-height: 16px;
  color: #b8b8b8;
  letter-spacing: .1px;
}
.card-name.deed + .card-meta { margin: 9px 0 0 0; }
.kebab {
  position: absolute;
  right: 15px;
  top: 28px;
  display: flex;
  flex-direction: column;
  gap: 1.5px;
}
.kebab i { width: 2.6px; height: 2.6px; border-radius: 50%; background: #6f6f6f; }

/* table */
.table {
  margin-top: 27px;
  width: 1505px;
  border: 1px solid #dcdcdc;
  border-radius: 12px;
  overflow: hidden;
  font-size: 12.2px;
  color: #333;
}
.row {
  display: grid;
  grid-template-columns: 64px 322px 245px 247px 260px 256px 1fr;
  align-items: center;
  height: 79px;
  border-bottom: 1px solid #dcdcdc;
}
.row.last { height: 78px; border-bottom: 0; }
.head {
  height: 54px;
  background: #f4f4f4;
  font-size: 12.2px;
  font-weight: 500;
  color: #1f1f1f;
}
.file { margin-left: 24px; }
.name { font-weight: 500; color: #262626; }
.status { display: flex; align-items: center; gap: 11px; font-weight: 600; font-size: 12.2px; }
.status::before { content: ""; width: 8px; height: 8px; border-radius: 50%; background: currentColor; }
.ok { color: #18b25e; }
.warn { color: #eeb92f; }
.tools { display: flex; align-items: center; padding-left: 15px; }
.kebab-row { display: flex; flex-direction: column; gap: 3px; margin-left: 36px; }
.kebab-row i { width: 4px; height: 4px; border-radius: 50%; background: #a0a0a0; }
```
